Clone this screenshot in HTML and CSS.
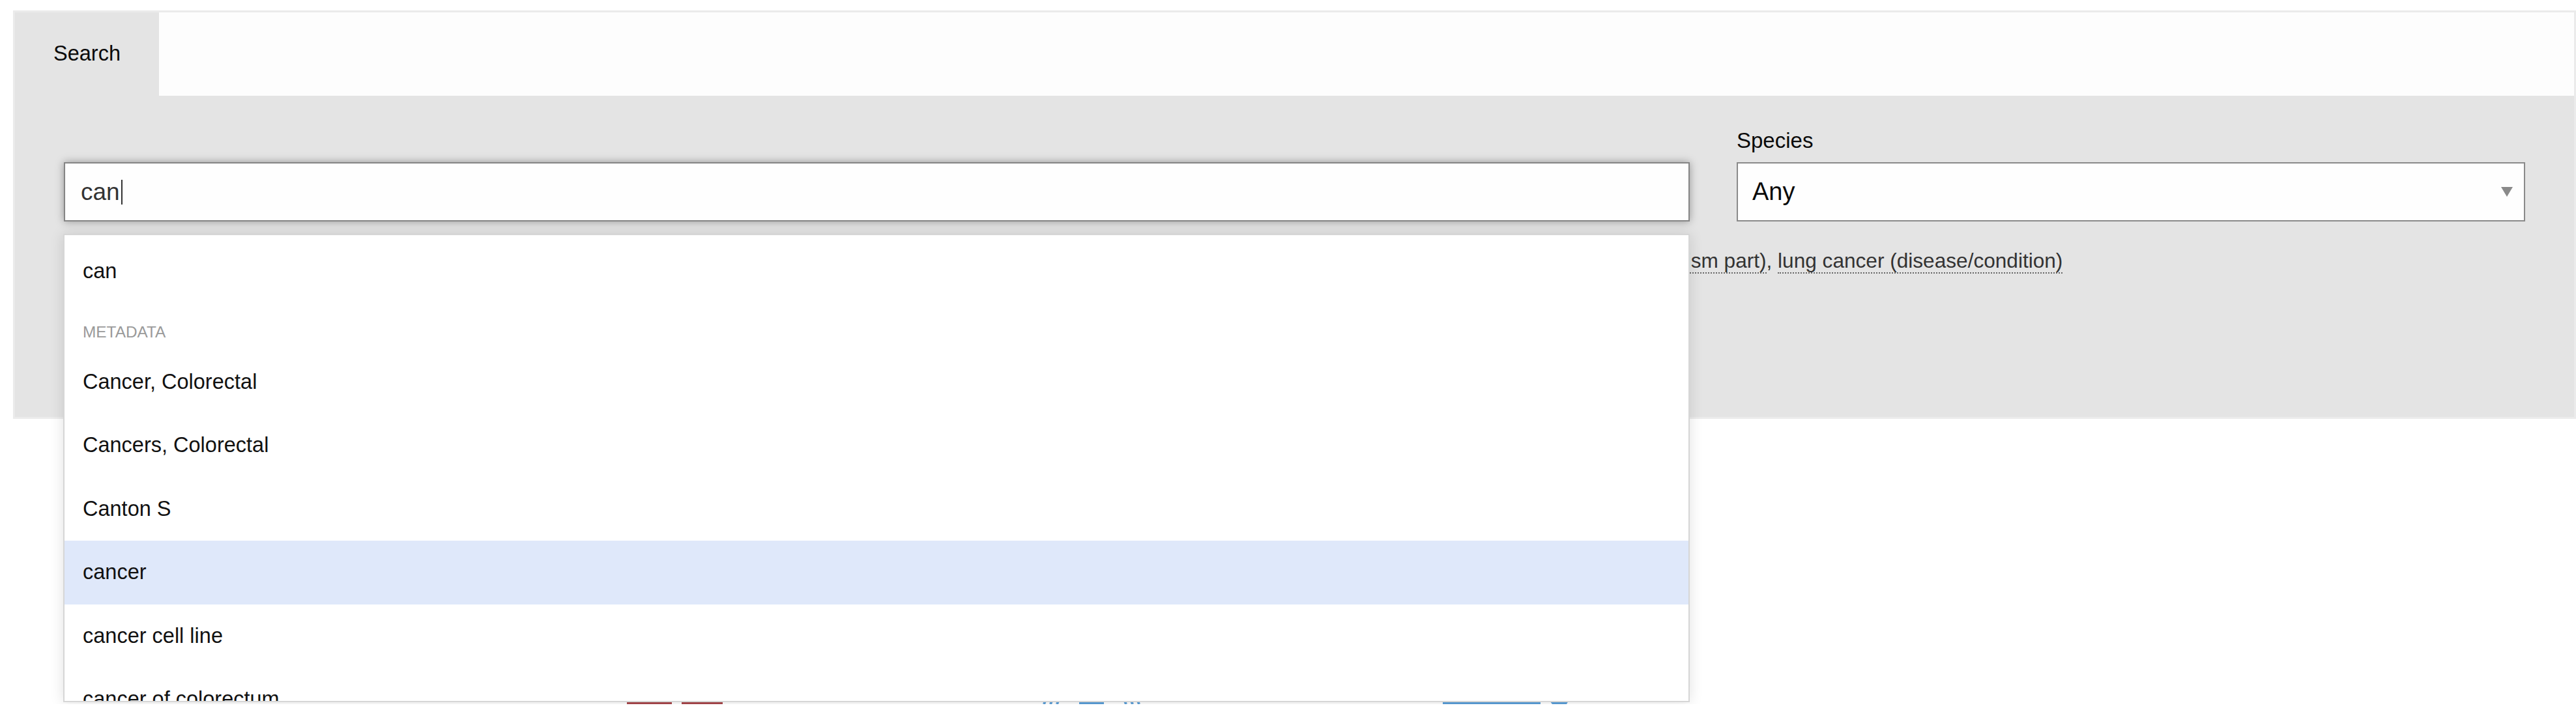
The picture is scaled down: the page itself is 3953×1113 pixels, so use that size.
FILE: index.html
```html
<!DOCTYPE html>
<html lang="en">
<head>
<meta charset="utf-8">
<title>Search</title>
<link rel="stylesheet" href="styles.css">
</head>
<body>
<div class="page">
  <div class="search-box">
    <div class="tabs">
      <div class="tab active">Search</div>
    </div>
    <div class="panel">
      <div class="form-row">
        <div class="col col-query">
          <div class="field-wrap">
            <div class="text-input" role="textbox">can<span class="caret"></span></div>
            <div class="suggestions" role="listbox">
              <div class="opt">can</div>
              <div class="group-header">Metadata</div>
              <div class="opt">Cancer, Colorectal</div>
              <div class="opt">Cancers, Colorectal</div>
              <div class="opt">Canton S</div>
              <div class="opt active">cancer</div>
              <div class="opt">cancer cell line</div>
              <div class="opt">cancer of colorectum</div>
            </div>
          </div>
        </div>
        <div class="col col-species">
          <label class="label">Species</label>
          <div class="select">Any<span class="arrow"></span></div>
        </div>
      </div>
      <p class="examples">Examples: <span class="ex">REG1B (gene)</span>, <span class="ex">zinc finger (gene ontology)</span>, <span class="ex">ENSG00000118058 (ensembl gene)</span>, <span class="ex">Q9NHW9 (uniprot)</span>, <span class="ex">ASPN (gene)</span>, <span class="ex">kinase (gene ontology)</span>, <span class="ex">CFTR (gene)</span>, <span class="ex">heart (organism part)</span>, <span class="ex">lung cancer (disease/condition)</span></p>
    </div>
  </div>
  <div class="logos">
    <svg class="logo logo-red" width="147" height="40" viewBox="0 0 147 40"><rect x="0" y="30" width="69" height="10" fill="#a8474b"/><rect x="84" y="30" width="63" height="10" fill="#a8474b"/></svg>
    <svg class="logo logo-blue1" width="160" height="40" viewBox="0 0 160 40"><path d="M6 40 L10 30 M16 40 L20 30 M26 40 L30 30" stroke="#5a9fd8" stroke-width="4"/><rect x="60" y="32" width="38" height="8" fill="#5a9fd8"/><path d="M128 30 L132 40 M138 30 L142 40 M148 30 L152 40" stroke="#5a9fd8" stroke-width="4"/></svg>
    <svg class="logo logo-blue2" width="200" height="40" viewBox="0 0 200 40"><rect x="0" y="30" width="150" height="10" fill="#5a9fd8"/><rect x="70" y="30" width="20" height="6" fill="#cfe3f5"/><path d="M160 30 L196 30 L190 40 L168 40 Z" fill="#5a9fd8"/></svg>
  </div>
</div>
</body>
</html>
```

FILE: styles.css
```css
html, body {
  margin: 0;
  background: #ffffff;
}

body {
  font-family: "Liberation Sans", Arial, Helvetica, sans-serif;
  color: #0a0a0a;
}

.page {
  padding: 16px 0 0 20px;
}

.search-box {
  border: 3px solid #ebebeb;
}

.tabs {
  display: flex;
  height: 128px;
  background: #fdfdfd;
}

.tab {
  padding: 0 59px;
  line-height: 126px;
  font-size: 32.5px;
  color: #0a0a0a;
}

.tab.active {
  background: #e4e4e4;
}

.panel {
  background: #e4e4e4;
  padding: 39px 75px 217px 75px;
}

.form-row {
  display: grid;
  grid-template-columns: minmax(0, 1fr) 1210px;
  column-gap: 72px;
  align-items: end;
}

.field-wrap {
  position: relative;
}

.text-input {
  box-sizing: border-box;
  height: 91px;
  border: 2.5px solid #858585;
  background: #fefefe;
  box-shadow: 0 0 12px rgba(0, 0, 0, 0.35);
  padding: 0 24px;
  font-size: 37px;
  color: #333333;
  display: flex;
  align-items: center;
}

.caret {
  display: inline-block;
  width: 2px;
  height: 38px;
  background: #333333;
  margin-left: 2px;
}

.label {
  display: block;
  height: 59px;
  line-height: 59px;
  margin-bottom: 4px;
  font-size: 33px;
  color: #0a0a0a;
}

.select {
  box-sizing: border-box;
  height: 91px;
  border: 2.5px solid #8a8a8a;
  background: #fefefe;
  padding: 0 17px 0 22px;
  font-size: 38px;
  color: #0a0a0a;
  display: flex;
  align-items: center;
}

.arrow {
  margin-left: auto;
  width: 0;
  height: 0;
  border-left: 9.5px solid transparent;
  border-right: 9.5px solid transparent;
  border-top: 15px solid #8a8a8a;
}

.examples {
  margin: 38px 0 0;
  font-size: 31.6px;
  line-height: 45px;
  color: #333333;
  white-space: nowrap;
}

.ex {
  border-bottom: 2.5px dotted #666666;
}

.suggestions {
  position: absolute;
  z-index: 10;
  top: calc(100% + 19px);
  left: -1px;
  right: 0;
  box-sizing: border-box;
  height: 719px;
  padding-top: 7px;
  border: 2.5px solid #d6d6d6;
  background: #ffffff;
  box-shadow: 0 0 20px rgba(0, 0, 0, 0.12);
  overflow: hidden;
}

.opt {
  height: 97.5px;
  line-height: 97.5px;
  padding: 0 28px;
  font-size: 32.5px;
  color: #111111;
  white-space: nowrap;
}

.opt.active {
  background: #dfe8fa;
}

.group-header {
  padding: 30px 28px 14px;
  line-height: 28px;
  font-size: 24.4px;
  color: #9a9a9a;
  text-transform: uppercase;
}

.logos {
  display: flex;
  align-items: flex-end;
  margin-top: 398px;
  padding-left: 942px;
}

.logo {
  display: block;
}

.logo-red {
  margin-right: 487px;
}

.logo-blue1 {
  margin-right: 458px;
}
```
